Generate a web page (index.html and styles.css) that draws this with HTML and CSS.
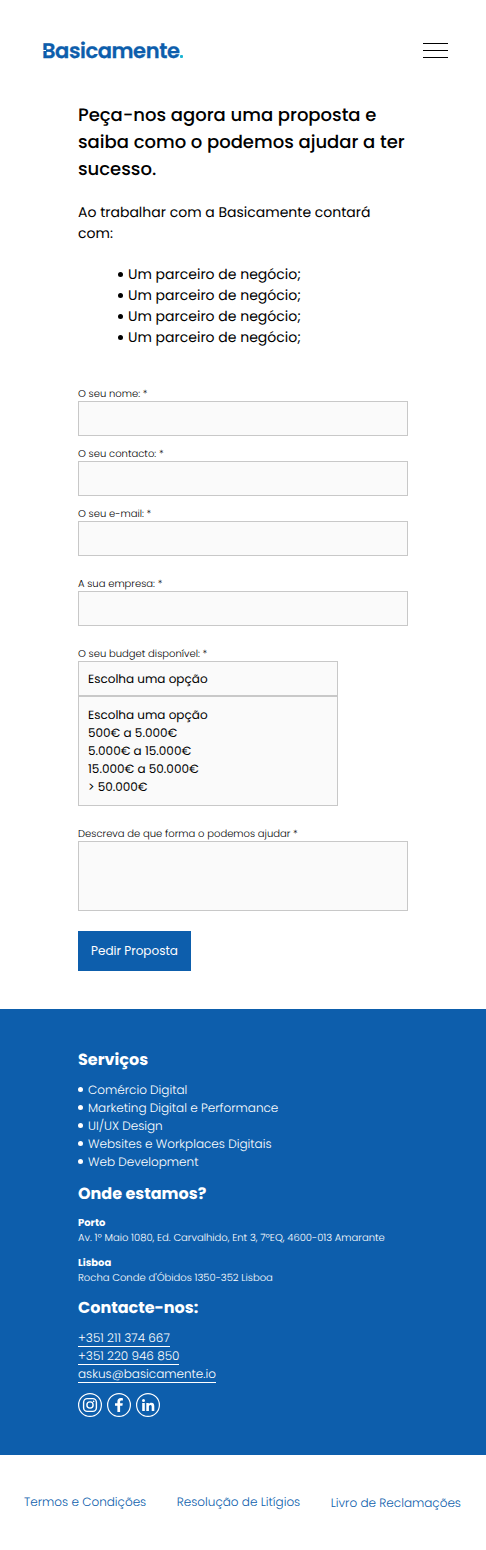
FILE: index.html
```
<!DOCTYPE html>
<html lang="pt">
<head>
<meta charset="utf-8">
<title>Basicamente</title>
<link rel="stylesheet" href="styles.css">
</head>
<body>
<header class="header">
  <a class="logo"><span>Basicamente</span><i class="logo-dot"></i></a>
  <div class="menu"><i></i><i></i><i></i></div>
</header>
<main class="main">
  <h1 class="title">Peça-nos agora uma proposta e<br>saiba como o podemos ajudar a ter<br>sucesso.</h1>
  <p class="intro">Ao trabalhar com a Basicamente contará<br>com:</p>
  <ul class="benefits">
    <li>Um parceiro de negócio;</li>
    <li>Um parceiro de negócio;</li>
    <li>Um parceiro de negócio;</li>
    <li>Um parceiro de negócio;</li>
  </ul>
  <form class="form">
    <div class="field"><label>O seu nome: *</label><div class="input"></div></div>
    <div class="field"><label>O seu contacto: *</label><div class="input"></div></div>
    <div class="field wide-gap"><label>O seu e-mail: *</label><div class="input"></div></div>
    <div class="field wide-gap"><label>A sua empresa: *</label><div class="input"></div></div>
    <div class="field wide-gap"><label>O seu budget disponível: *</label>
      <div class="select">Escolha uma opção</div>
      <div class="options">
        <span>Escolha uma opção</span>
        <span>500€ a 5.000€</span>
        <span>5.000€ a 15.000€</span>
        <span>15.000€ a 50.000€</span>
        <span>&gt; 50.000€</span>
      </div>
    </div>
    <div class="field wide-gap"><label>Descreva de que forma o podemos ajudar *</label><div class="input textarea"></div></div>
    <button class="submit" type="button">Pedir Proposta</button>
  </form>
</main>
<footer class="footer">
  <h2>Serviços</h2>
  <ul class="services">
    <li>Comércio Digital</li>
    <li>Marketing Digital e Performance</li>
    <li>UI/UX Design</li>
    <li>Websites e Workplaces Digitais</li>
    <li>Web Development</li>
  </ul>
  <h2>Onde estamos?</h2>
  <div class="places">
    <p><b>Porto</b><br>Av. 1º Maio 1080, Ed. Carvalhido, Ent 3, 7ºEQ, 4600-013 Amarante</p>
    <p><b>Lisboa</b><br>Rocha Conde d'Óbidos 1350-352 Lisboa</p>
  </div>
  <h2>Contacte-nos:</h2>
  <div class="contacts">
    <a>+351 211 374 667</a>
    <a>+351 220 946 850</a>
    <a>askus@basicamente.io</a>
  </div>
  <div class="social">
    <svg viewBox="0 0 24 24" fill="none" stroke="#fff"><circle cx="12" cy="12" r="11.4" stroke-width="1.2"/><rect x="5.6" y="5.6" width="12.8" height="12.8" rx="3.6" stroke-width="1.4"/><circle cx="12" cy="12" r="3.1" stroke-width="1.4"/><circle cx="15.6" cy="8.4" r=".8" fill="#fff" stroke="none"/></svg>
    <svg viewBox="0 0 24 24" fill="none"><circle cx="12" cy="12" r="11.4" stroke="#fff" stroke-width="1.2"/><path fill="#fff" d="M10.4 19v-6.2H8v-2.5h2.4V8.5C10.4 6.2 11.7 5 13.8 5c.9 0 1.8.1 2.1.2v2.3h-1.3c-1.2 0-1.5.6-1.5 1.4v1.4h2.7l-.4 2.5h-2.3V19z"/></svg>
    <svg viewBox="0 0 24 24" fill="none"><circle cx="12" cy="12" r="11.4" stroke="#fff" stroke-width="1.2"/><g fill="#fff"><circle cx="7.5" cy="7.5" r="1.5"/><path d="M6.2 10h2.6v8H6.2zM10.3 10h2.5v1.1c.4-.7 1.3-1.3 2.5-1.3 2.5 0 3 1.6 3 3.8V18h-2.6v-3.9c0-1 0-2.1-1.3-2.1s-1.5 1-1.5 2.1V18h-2.6z"/></g></svg>
  </div>
</footer>
<nav class="legal">
  <a>Termos e Condições</a>
  <a>Resolução de Litígios</a>
  <a class="low">Livro de Reclamações</a>
</nav>
</body>
</html>
```
FILE: styles.css
```
* { box-sizing: border-box; margin: 0; padding: 0; }
body {
  background: #fff;
  color: #000;
  font-family: Poppins, Inter, sans-serif;
  text-rendering: geometricPrecision;
}
ul { list-style: none; }

.header {
  display: flex;
  justify-content: space-between;
  align-items: center;
  height: 101px;
  padding: 0 38px 0 42px;
}
.logo {
  position: relative;
  display: flex;
  align-items: baseline;
  padding-top: 3px;
  font-size: 21px;
  line-height: 26px;
  font-weight: 600;
  letter-spacing: -0.4px;
  color: #0d5eac;
  -webkit-text-stroke: 0.3px #0d5eac;
}
/* Notch in the stem of the B */
.logo::before {
  content: "";
  position: absolute;
  left: 1px;
  top: 14px;
  width: 3px;
  height: 1px;
  background: #fff;
}
.logo-dot { width: 3px; height: 3px; margin-left: 1px; background: #1cb5d3; border-radius: 1px; }
.menu { display: flex; flex-direction: column; gap: 6px; width: 25px; }
.menu i { height: 1px; background: #000; }

.main { height: 908px; padding: 1px 78px 0; }
.title { font-size: 18px; line-height: 27px; font-weight: 500; white-space: nowrap; }
.intro { margin-top: 19px; font-size: 14px; line-height: 21px; white-space: nowrap; }
.benefits { margin: 20px 0 38px; padding-left: 40px; font-size: 14px; line-height: 21px; }
.benefits li, .services li { display: flex; align-items: center; gap: 5px; }
.benefits li::before, .services li::before {
  content: "";
  width: 5px;
  height: 5px;
  border-radius: 50%;
  background: currentColor;
}
.services li::before { margin-bottom: 3px; }

.form { font-size: 12px; line-height: 18px; }
.field { margin-bottom: 10px; }
.field.wide-gap { margin-bottom: 20px; }
label { display: block; font-size: 10px; line-height: 15px; font-weight: 300; }
.input, .select, .options { background: #fafafa; border: 1px solid #c8c8c8; }
.input { height: 35px; }
.input.textarea { height: 70px; }
.select, .options { width: 260px; padding-left: 9px; }
.select { height: 35px; padding-top: 1px; line-height: 34px; }
.options { display: flex; flex-direction: column; height: 110px; padding-top: 10px; }
.submit {
  display: block;
  width: 113px;
  height: 40px;
  border: 0;
  background: #0d5eac;
  color: #fff;
  font: inherit;
}

.footer { height: 446px; padding: 38px 78px 0; background: #0d5eac; color: #fff; font-weight: 300; white-space: nowrap; }
.footer h2 { padding-top: 1px; font-size: 16px; line-height: 24px; font-weight: 700; }
.services { margin: 10px 0 9px; font-size: 12px; line-height: 18px; }
.places { display: grid; gap: 10px; margin: 9px 0 10px; font-size: 10px; line-height: 15px; }
.places b { font-weight: 700; }
.contacts { display: flex; flex-direction: column; align-items: flex-start; margin: 9px 0 10px; font-size: 12px; }
.contacts a { height: 18px; padding-top: 1px; line-height: 18px; border-bottom: 1px solid #fff; }
.social { display: flex; gap: 5px; }
.social svg { width: 24px; height: 24px; }

.legal {
  display: flex;
  justify-content: space-between;
  height: 95px;
  padding: 39px 25px 0 24px;
  font-size: 12px;
  line-height: 18px;
  font-weight: 300;
  color: #0d5eac;
  white-space: nowrap;
}
.legal .low { padding-top: 1px; }
```
